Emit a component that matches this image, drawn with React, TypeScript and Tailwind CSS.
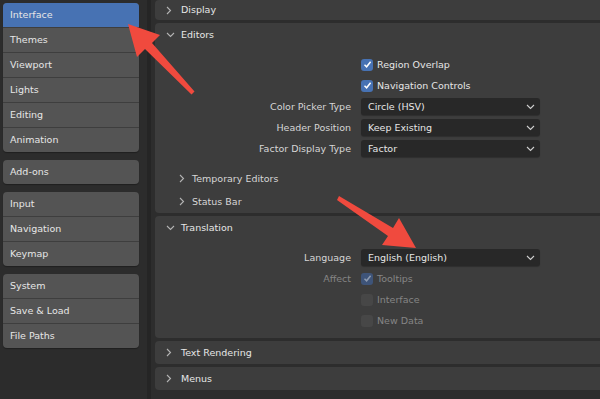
import type { ReactNode } from 'react'

const navGroups = [
  ['Interface', 'Themes', 'Viewport', 'Lights', 'Editing', 'Animation'],
  ['Add-ons'],
  ['Input', 'Navigation', 'Keymap'],
  ['System', 'Save & Load', 'File Paths'],
]

function ChevronRight() {
  return (
    <svg width="6" height="9" viewBox="0 0 6 9" className="shrink-0">
      <path d="M1 1 L4.5 4.5 L1 8" fill="none" stroke="#b4b4b4" strokeWidth="1.1" />
    </svg>
  )
}

function ChevronDown({ color = '#b4b4b4' }: { color?: string }) {
  return (
    <svg width="9" height="6" viewBox="0 0 9 6" className="shrink-0">
      <path d="M1 1 L4.5 4.5 L8 1" fill="none" stroke={color} strokeWidth="1.1" />
    </svg>
  )
}

function Checkbox({ checked, disabled }: { checked?: boolean; disabled?: boolean }) {
  const bg = checked ? (disabled ? 'bg-[#3e5479]' : 'bg-[#4772b3]') : 'bg-[#474747]'
  return (
    <div className={`w-[12px] h-[12px] rounded-[3px] flex items-center justify-center ${bg}`}>
      {checked && (
        <svg width="9" height="9" viewBox="0 0 9 9">
          <path
            d="M1.5 4.8 L3.6 6.8 L7.6 1.8"
            fill="none"
            stroke={disabled ? '#8e9bb0' : '#ffffff'}
            strokeWidth="1.5"
          />
        </svg>
      )}
    </div>
  )
}

function Row({ label, dim, children }: { label?: string; dim?: boolean; children: ReactNode }) {
  return (
    <div className="h-[21px] flex items-center">
      <div className={`w-[196px] text-right ${dim ? 'text-[#858585]' : 'text-[#d6d6d6]'}`}>{label}</div>
      <div className="ml-[10px] w-[179px] flex items-center">{children}</div>
    </div>
  )
}

function Select({ value }: { value: string }) {
  return (
    <div className="w-full h-[17px] rounded-[3px] bg-[#282828] shadow-[0_1px_1px_rgba(0,0,0,0.25)] flex items-center justify-between pl-[7px] pr-[5px] text-[#e6e6e6]">
      <span>{value}</span>
      <ChevronDown color="#d0d0d0" />
    </div>
  )
}

function Check({ label, checked, disabled }: { label: string; checked?: boolean; disabled?: boolean }) {
  return (
    <div className="flex items-center gap-[4px]">
      <Checkbox checked={checked} disabled={disabled} />
      <span className={disabled ? 'text-[#858585]' : 'text-[#e6e6e6]'}>{label}</span>
    </div>
  )
}

function PanelHeader({ title, open, h = 'h-[23px]' }: { title: string; open?: boolean; h?: string }) {
  return (
    <div className={`${h} flex items-center pl-[11px] gap-[6px] text-[#e6e6e6]`}>
      {open ? <ChevronDown /> : <ChevronRight />}
      <span className={open ? '' : 'ml-[3px]'}>{title}</span>
    </div>
  )
}

function SubHeader({ title }: { title: string }) {
  return (
    <div className="h-[23px] flex items-center pl-[24px] gap-[7px] text-[#d6d6d6]">
      <ChevronRight />
      <span>{title}</span>
    </div>
  )
}

export default function App() {
  return (
    <div className="relative w-[600px] h-[399px] flex overflow-hidden bg-[#2d2d2d] font-['DejaVu_Sans',sans-serif] text-[9.5px] leading-none">
      <aside className="w-[147px] shrink-0 bg-[#2c2c2c] pl-[3px] pr-[8px] pt-[3px] flex flex-col gap-[8px]">
        {navGroups.map((group, gi) => (
          <div key={gi} className="rounded-[4px] overflow-hidden bg-[#545454] shadow-[0_1px_1px_rgba(0,0,0,0.3)]">
            {group.map((item, i) => (
              <div
                key={item}
                className={`h-[24px] flex items-center pl-[7px] text-[#e6e6e6] ${
                  i > 0 ? 'border-t border-[#3e3e3e] h-[25px]' : ''
                } ${item === 'Interface' ? 'bg-[#4772b3]' : ''}`}
              >
                {item}
              </div>
            ))}
          </div>
        ))}
      </aside>
      <div className="w-[4px] shrink-0 bg-[#252525]" />

      <main className="flex-1 pl-[4px] -mr-[10px] flex flex-col gap-[3px]">
        <section className="rounded-[4px] bg-[#3d3d3d]">
          <PanelHeader title="Display" h="h-[20px]" />
        </section>

        <section className="rounded-[4px] bg-[#3d3d3d]">
          <PanelHeader title="Editors" open />
          <div className="pt-[8px]">
            <Row>
              <Check label="Region Overlap" checked />
            </Row>
            <Row>
              <Check label="Navigation Controls" checked />
            </Row>
            <Row label="Color Picker Type">
              <Select value="Circle (HSV)" />
            </Row>
            <Row label="Header Position">
              <Select value="Keep Existing" />
            </Row>
            <Row label="Factor Display Type">
              <Select value="Factor" />
            </Row>
          </div>
          <div className="mt-[8px]">
            <SubHeader title="Temporary Editors" />
            <SubHeader title="Status Bar" />
          </div>
        </section>

        <section className="rounded-[4px] bg-[#3d3d3d] pb-[7px]">
          <PanelHeader title="Translation" open />
          <div className="pt-[8px]">
            <Row label="Language">
              <Select value="English (English)" />
            </Row>
            <Row label="Affect" dim>
              <Check label="Tooltips" checked disabled />
            </Row>
            <Row>
              <Check label="Interface" disabled />
            </Row>
            <Row>
              <Check label="New Data" disabled />
            </Row>
          </div>
        </section>

        <section className="rounded-[4px] bg-[#3d3d3d]">
          <PanelHeader title="Text Rendering" />
        </section>
        <section className="rounded-[4px] bg-[#3d3d3d]">
          <PanelHeader title="Menus" />
        </section>
      </main>

      {/* annotation arrows */}
      <svg className="absolute inset-0 pointer-events-none" width="600" height="399" viewBox="0 0 600 399">
        <path d="M128 24 L160 35 L152 43 L194.5 91.6 L191.5 94.4 L145 49 L137 57 Z" fill="#f04a3e" />
        <path d="M416 248 L382 245 L388 236 L337 200 L339 196 L393 228 L399 218 Z" fill="#f04a3e" />
      </svg>
    </div>
  )
}
